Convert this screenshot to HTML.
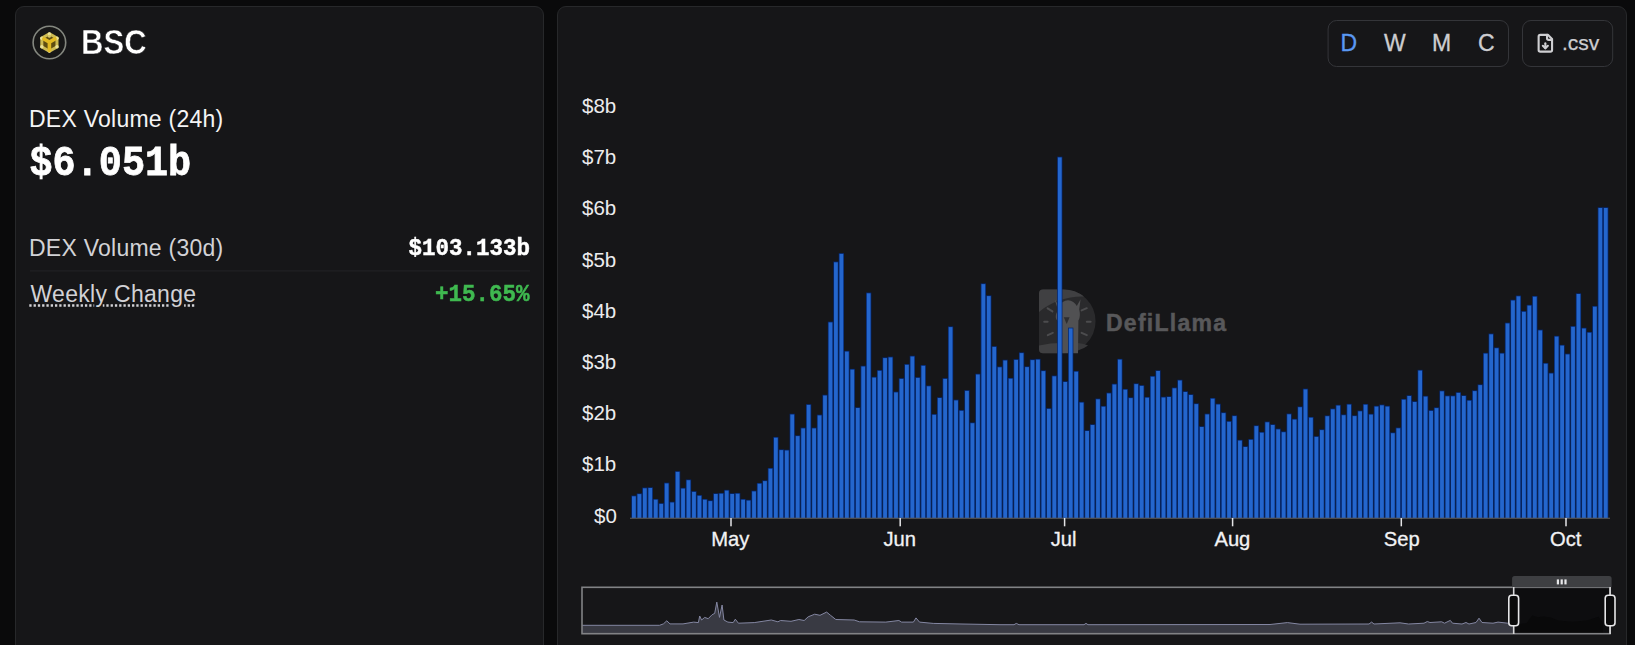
<!DOCTYPE html>
<html><head><meta charset="utf-8"><title>BSC DEX Volume</title>
<style>
html,body{margin:0;padding:0;}
body{width:1635px;height:645px;overflow:hidden;background:#0a0a0b;font-family:"Liberation Sans",sans-serif;position:relative;color:#fff;}
.card{position:absolute;top:6px;height:700px;background:#161618;border:1px solid #27282a;border-radius:9px;box-sizing:border-box;}
#c1{left:15px;width:529px;}
#c2{left:557px;width:1070px;}
.t{position:absolute;white-space:nowrap;line-height:1;margin:0;}
.mono{font-family:"Liberation Mono",monospace;font-weight:bold;}
svg{position:absolute;left:0;top:0;}
.xl{transform:translateX(-50%);font-size:20.2px;color:#f2f2f4;-webkit-text-stroke:0.3px #f2f2f4;}
</style></head><body>
<div class="card" id="c1"></div>
<div class="card" id="c2"></div>

<!-- chain icon -->
<svg width="1635" height="645" viewBox="0 0 1635 645" style="pointer-events:none">
  <g id="icon">
    <circle cx="49.4" cy="42.5" r="16.3" fill="#171717" stroke="#84877f" stroke-width="1.6"/>
    <g style="filter:blur(0.35px)">
    <polygon points="49.40,32.10 58.50,37.30 58.50,47.70 49.40,52.90 40.30,47.70 40.30,37.30" fill="#cdbb52"/>
    <polygon points="49.40,35.50 55.46,39.00 55.46,46.00 49.40,49.50 43.34,46.00 43.34,39.00" fill="#5e4d12"/>
    <circle cx="49.40" cy="33.90" r="1.7" fill="#e9e19a"/><circle cx="57.00" cy="38.20" r="1.7" fill="#e9e19a"/><circle cx="57.00" cy="46.80" r="1.7" fill="#e9e19a"/><circle cx="49.40" cy="51.10" r="1.7" fill="#e9e19a"/><circle cx="41.80" cy="46.80" r="1.7" fill="#e9e19a"/><circle cx="41.80" cy="38.20" r="1.7" fill="#e9e19a"/>
    <path d="M49.4 41.9 L49.4 50.5 M49.4 42.1 L43.8 38.9 M49.4 42.1 L55.0 38.9" stroke="#e2ba22" stroke-width="3.6" fill="none" stroke-linecap="round"/>
    <circle cx="49.4" cy="36.3" r="1.5" fill="#d9c865"/>
    </g>
  </g>

  <!-- watermark -->
  <g id="wm">
    <path d="M1043 289.4 H1063.5 A32.1 31.9 0 0 1 1063.5 353.2 H1043 A4 4 0 0 1 1039 349.2 V293.4 A4 4 0 0 1 1043 289.4 Z" fill="#2a2a2c"/>
    <path d="M1043 289.4 H1063.5 A32.1 31.9 0 0 1 1084 296.6 C1069 296 1052 301 1039 312 V293.4 A4 4 0 0 1 1043 289.4 Z" fill="#404042"/>
    <path d="M1039 345.5 C1048 343.5 1056 342.8 1062 343 L1062 353.2 H1043 A4 4 0 0 1 1039 349.2 Z" fill="#404042"/>
    <path d="M1078 343 C1082 343.5 1086 344.5 1088 345.5 A32 32 0 0 1 1078 350.6 Z" fill="#38383a"/>
    <path d="M1054.6 299.3 L1059.2 306 C1061 303 1064 300.6 1068 300.3 C1072 300.6 1075 303 1076.8 306 L1080.6 299.3 L1079.2 309.5 C1080.2 313 1080.2 318 1078.4 320.5 L1078 353.2 L1062 353.2 L1062 322.3 C1056 322.5 1054.3 317 1057 312 L1057.2 307.5 Z" fill="#515153"/>
    <path d="M1063.8 317.3 L1069.6 317.3 L1066.7 324 Z" fill="#2e2e30"/>
    <g stroke="#4c4c4e" stroke-width="2" stroke-linecap="round">
      <line x1="1047.6" y1="308.4" x2="1052.4" y2="311.4"/><line x1="1081.6" y1="310.4" x2="1086.8" y2="308.2"/>
      <line x1="1044.2" y1="321.8" x2="1047.6" y2="321.8"/><line x1="1086.8" y1="321.8" x2="1090.6" y2="321.8"/>
      <line x1="1047.8" y1="335.2" x2="1052.8" y2="332.8"/><line x1="1081.6" y1="332.8" x2="1086.8" y2="335.2"/>
    </g>
  </g>

  <!-- bars -->
  <clipPath id="cb"><rect x="620" y="90" width="1000" height="428"/></clipPath>
  <g id="bars" fill="#2466cd" stroke="#05276e" stroke-width="1.5" paint-order="stroke" clip-path="url(#cb)">
<rect x="632.00" y="496.3" width="3.8" height="21.7"/>
<rect x="637.46" y="494.1" width="3.8" height="23.9"/>
<rect x="642.92" y="488.3" width="3.8" height="29.7"/>
<rect x="648.38" y="488.0" width="3.8" height="30.0"/>
<rect x="653.84" y="499.7" width="3.8" height="18.3"/>
<rect x="659.30" y="503.9" width="3.8" height="14.1"/>
<rect x="664.76" y="483.4" width="3.8" height="34.6"/>
<rect x="670.22" y="502.5" width="3.8" height="15.5"/>
<rect x="675.68" y="471.9" width="3.8" height="46.1"/>
<rect x="681.14" y="488.6" width="3.8" height="29.4"/>
<rect x="686.60" y="480.2" width="3.8" height="37.8"/>
<rect x="692.06" y="491.9" width="3.8" height="26.1"/>
<rect x="697.52" y="495.8" width="3.8" height="22.2"/>
<rect x="702.98" y="499.7" width="3.8" height="18.3"/>
<rect x="708.44" y="501.1" width="3.8" height="16.9"/>
<rect x="713.90" y="494.0" width="3.8" height="24.0"/>
<rect x="719.36" y="493.7" width="3.8" height="24.3"/>
<rect x="724.82" y="490.6" width="3.8" height="27.4"/>
<rect x="730.28" y="494.0" width="3.8" height="24.0"/>
<rect x="735.74" y="493.7" width="3.8" height="24.3"/>
<rect x="741.20" y="499.7" width="3.8" height="18.3"/>
<rect x="746.66" y="500.6" width="3.8" height="17.4"/>
<rect x="752.12" y="491.4" width="3.8" height="26.6"/>
<rect x="757.58" y="483.7" width="3.8" height="34.3"/>
<rect x="763.04" y="481.1" width="3.8" height="36.9"/>
<rect x="768.50" y="468.7" width="3.8" height="49.3"/>
<rect x="773.96" y="437.7" width="3.8" height="80.3"/>
<rect x="779.42" y="450.1" width="3.8" height="67.9"/>
<rect x="784.88" y="450.5" width="3.8" height="67.5"/>
<rect x="790.34" y="414.5" width="3.8" height="103.5"/>
<rect x="795.80" y="436.1" width="3.8" height="81.9"/>
<rect x="801.26" y="428.4" width="3.8" height="89.6"/>
<rect x="806.72" y="404.9" width="3.8" height="113.1"/>
<rect x="812.18" y="428.4" width="3.8" height="89.6"/>
<rect x="817.64" y="415.4" width="3.8" height="102.6"/>
<rect x="823.10" y="395.5" width="3.8" height="122.5"/>
<rect x="828.56" y="322.4" width="3.8" height="195.6"/>
<rect x="834.02" y="262.3" width="3.8" height="255.7"/>
<rect x="839.48" y="253.9" width="3.8" height="264.1"/>
<rect x="844.94" y="351.6" width="3.8" height="166.4"/>
<rect x="850.40" y="369.6" width="3.8" height="148.4"/>
<rect x="855.86" y="408.0" width="3.8" height="110.0"/>
<rect x="861.32" y="366.5" width="3.8" height="151.5"/>
<rect x="866.78" y="293.3" width="3.8" height="224.7"/>
<rect x="872.24" y="377.6" width="3.8" height="140.4"/>
<rect x="877.70" y="370.8" width="3.8" height="147.2"/>
<rect x="883.16" y="358.1" width="3.8" height="159.9"/>
<rect x="888.62" y="357.4" width="3.8" height="160.6"/>
<rect x="894.08" y="392.4" width="3.8" height="125.6"/>
<rect x="899.54" y="378.9" width="3.8" height="139.1"/>
<rect x="905.00" y="364.8" width="3.8" height="153.2"/>
<rect x="910.46" y="356.5" width="3.8" height="161.5"/>
<rect x="915.92" y="377.9" width="3.8" height="140.1"/>
<rect x="921.38" y="365.8" width="3.8" height="152.2"/>
<rect x="926.84" y="386.3" width="3.8" height="131.7"/>
<rect x="932.30" y="414.8" width="3.8" height="103.2"/>
<rect x="937.76" y="398.0" width="3.8" height="120.0"/>
<rect x="943.22" y="378.9" width="3.8" height="139.1"/>
<rect x="948.68" y="327.1" width="3.8" height="190.9"/>
<rect x="954.14" y="400.4" width="3.8" height="117.6"/>
<rect x="959.60" y="410.8" width="3.8" height="107.2"/>
<rect x="965.06" y="390.9" width="3.8" height="127.1"/>
<rect x="970.52" y="423.2" width="3.8" height="94.8"/>
<rect x="975.98" y="374.5" width="3.8" height="143.5"/>
<rect x="981.44" y="284.1" width="3.8" height="233.9"/>
<rect x="986.90" y="296.1" width="3.8" height="221.9"/>
<rect x="992.36" y="346.9" width="3.8" height="171.1"/>
<rect x="997.82" y="367.3" width="3.8" height="150.7"/>
<rect x="1003.28" y="360.5" width="3.8" height="157.5"/>
<rect x="1008.74" y="378.7" width="3.8" height="139.3"/>
<rect x="1014.20" y="359.9" width="3.8" height="158.1"/>
<rect x="1019.66" y="353.1" width="3.8" height="164.9"/>
<rect x="1025.12" y="367.1" width="3.8" height="150.9"/>
<rect x="1030.58" y="360.1" width="3.8" height="157.9"/>
<rect x="1036.04" y="359.6" width="3.8" height="158.4"/>
<rect x="1041.50" y="371.1" width="3.8" height="146.9"/>
<rect x="1046.96" y="408.9" width="3.8" height="109.1"/>
<rect x="1052.42" y="376.3" width="3.8" height="141.7"/>
<rect x="1057.88" y="157.4" width="3.8" height="360.6"/>
<rect x="1063.34" y="382.0" width="3.8" height="136.0"/>
<rect x="1068.80" y="328.4" width="3.8" height="189.6"/>
<rect x="1074.26" y="371.7" width="3.8" height="146.3"/>
<rect x="1079.72" y="402.6" width="3.8" height="115.4"/>
<rect x="1085.18" y="431.0" width="3.8" height="87.0"/>
<rect x="1090.64" y="425.0" width="3.8" height="93.0"/>
<rect x="1096.10" y="399.3" width="3.8" height="118.7"/>
<rect x="1101.56" y="406.7" width="3.8" height="111.3"/>
<rect x="1107.02" y="393.4" width="3.8" height="124.6"/>
<rect x="1112.48" y="384.5" width="3.8" height="133.5"/>
<rect x="1117.94" y="359.6" width="3.8" height="158.4"/>
<rect x="1123.40" y="389.7" width="3.8" height="128.3"/>
<rect x="1128.86" y="398.1" width="3.8" height="119.9"/>
<rect x="1134.32" y="384.1" width="3.8" height="133.9"/>
<rect x="1139.78" y="385.9" width="3.8" height="132.1"/>
<rect x="1145.24" y="397.7" width="3.8" height="120.3"/>
<rect x="1150.70" y="376.7" width="3.8" height="141.3"/>
<rect x="1156.16" y="371.0" width="3.8" height="147.0"/>
<rect x="1161.62" y="397.5" width="3.8" height="120.5"/>
<rect x="1167.08" y="397.0" width="3.8" height="121.0"/>
<rect x="1172.54" y="388.3" width="3.8" height="129.7"/>
<rect x="1178.00" y="380.5" width="3.8" height="137.5"/>
<rect x="1183.46" y="392.0" width="3.8" height="126.0"/>
<rect x="1188.92" y="395.0" width="3.8" height="123.0"/>
<rect x="1194.38" y="404.1" width="3.8" height="113.9"/>
<rect x="1199.84" y="427.0" width="3.8" height="91.0"/>
<rect x="1205.30" y="414.4" width="3.8" height="103.6"/>
<rect x="1210.76" y="398.7" width="3.8" height="119.3"/>
<rect x="1216.22" y="404.5" width="3.8" height="113.5"/>
<rect x="1221.68" y="413.1" width="3.8" height="104.9"/>
<rect x="1227.14" y="421.8" width="3.8" height="96.2"/>
<rect x="1232.60" y="416.1" width="3.8" height="101.9"/>
<rect x="1238.06" y="440.6" width="3.8" height="77.4"/>
<rect x="1243.52" y="447.0" width="3.8" height="71.0"/>
<rect x="1248.98" y="439.8" width="3.8" height="78.2"/>
<rect x="1254.44" y="426.1" width="3.8" height="91.9"/>
<rect x="1259.90" y="432.7" width="3.8" height="85.3"/>
<rect x="1265.36" y="422.3" width="3.8" height="95.7"/>
<rect x="1270.82" y="425.0" width="3.8" height="93.0"/>
<rect x="1276.28" y="429.4" width="3.8" height="88.6"/>
<rect x="1281.74" y="432.2" width="3.8" height="85.8"/>
<rect x="1287.20" y="414.3" width="3.8" height="103.7"/>
<rect x="1292.66" y="419.6" width="3.8" height="98.4"/>
<rect x="1298.12" y="407.2" width="3.8" height="110.8"/>
<rect x="1303.58" y="389.4" width="3.8" height="128.6"/>
<rect x="1309.04" y="417.7" width="3.8" height="100.3"/>
<rect x="1314.50" y="436.9" width="3.8" height="81.1"/>
<rect x="1319.96" y="430.1" width="3.8" height="87.9"/>
<rect x="1325.42" y="416.2" width="3.8" height="101.8"/>
<rect x="1330.88" y="409.3" width="3.8" height="108.7"/>
<rect x="1336.34" y="405.6" width="3.8" height="112.4"/>
<rect x="1341.80" y="415.2" width="3.8" height="102.8"/>
<rect x="1347.26" y="404.6" width="3.8" height="113.4"/>
<rect x="1352.72" y="416.1" width="3.8" height="101.9"/>
<rect x="1358.18" y="411.3" width="3.8" height="106.7"/>
<rect x="1363.64" y="404.7" width="3.8" height="113.3"/>
<rect x="1369.10" y="414.6" width="3.8" height="103.4"/>
<rect x="1374.56" y="406.6" width="3.8" height="111.4"/>
<rect x="1380.02" y="405.3" width="3.8" height="112.7"/>
<rect x="1385.48" y="406.6" width="3.8" height="111.4"/>
<rect x="1390.94" y="433.2" width="3.8" height="84.8"/>
<rect x="1396.40" y="428.3" width="3.8" height="89.7"/>
<rect x="1401.86" y="399.7" width="3.8" height="118.3"/>
<rect x="1407.32" y="396.0" width="3.8" height="122.0"/>
<rect x="1412.78" y="402.0" width="3.8" height="116.0"/>
<rect x="1418.24" y="370.6" width="3.8" height="147.4"/>
<rect x="1423.70" y="396.6" width="3.8" height="121.4"/>
<rect x="1429.16" y="410.9" width="3.8" height="107.1"/>
<rect x="1434.62" y="408.1" width="3.8" height="109.9"/>
<rect x="1440.08" y="391.3" width="3.8" height="126.7"/>
<rect x="1445.54" y="396.3" width="3.8" height="121.7"/>
<rect x="1451.00" y="396.3" width="3.8" height="121.7"/>
<rect x="1456.46" y="392.9" width="3.8" height="125.1"/>
<rect x="1461.92" y="396.0" width="3.8" height="122.0"/>
<rect x="1467.38" y="400.7" width="3.8" height="117.3"/>
<rect x="1472.84" y="391.1" width="3.8" height="126.9"/>
<rect x="1478.30" y="385.1" width="3.8" height="132.9"/>
<rect x="1483.76" y="353.6" width="3.8" height="164.4"/>
<rect x="1489.22" y="334.3" width="3.8" height="183.7"/>
<rect x="1494.68" y="348.2" width="3.8" height="169.8"/>
<rect x="1500.14" y="353.6" width="3.8" height="164.4"/>
<rect x="1505.60" y="323.4" width="3.8" height="194.6"/>
<rect x="1511.06" y="300.5" width="3.8" height="217.5"/>
<rect x="1516.52" y="296.3" width="3.8" height="221.7"/>
<rect x="1521.98" y="311.8" width="3.8" height="206.2"/>
<rect x="1527.44" y="305.6" width="3.8" height="212.4"/>
<rect x="1532.90" y="296.7" width="3.8" height="221.3"/>
<rect x="1538.36" y="330.4" width="3.8" height="187.6"/>
<rect x="1543.82" y="363.7" width="3.8" height="154.3"/>
<rect x="1549.28" y="373.5" width="3.8" height="144.5"/>
<rect x="1554.74" y="336.6" width="3.8" height="181.4"/>
<rect x="1560.20" y="345.6" width="3.8" height="172.4"/>
<rect x="1565.66" y="354.4" width="3.8" height="163.6"/>
<rect x="1571.12" y="326.8" width="3.8" height="191.2"/>
<rect x="1576.58" y="294.0" width="3.8" height="224.0"/>
<rect x="1582.04" y="328.5" width="3.8" height="189.5"/>
<rect x="1587.50" y="332.7" width="3.8" height="185.3"/>
<rect x="1592.96" y="306.7" width="3.8" height="211.3"/>
<rect x="1598.42" y="208.0" width="3.8" height="310.0"/>
<rect x="1603.88" y="208.0" width="3.8" height="310.0"/>
  </g>
  <!-- axis -->
  <rect x="630" y="517.7" width="980" height="1.1" fill="#5a5b5f"/>
  <g fill="#e4e4e6">
    <rect x="730.25" y="518" width="1.5" height="8.3"/>
    <rect x="899.45" y="518" width="1.5" height="8.3"/>
    <rect x="1063.85" y="518" width="1.5" height="8.3"/>
    <rect x="1231.85" y="518" width="1.5" height="8.3"/>
    <rect x="1400.55" y="518" width="1.5" height="8.3"/>
    <rect x="1565.25" y="518" width="1.5" height="8.3"/>
  </g>

  <!-- data zoom -->
  <g id="dz">
    <polygon points="582.0,625.3 659.5,625.3 663.4,623.9 666.8,620.8 670.0,623.9 683.0,623.9 693.7,622.1 698.4,622.6 699.7,616.0 701.6,620.0 704.7,617.4 708.2,618.7 712.1,614.7 714.7,613.4 716.8,602.1 719.5,617.4 722.1,605.0 723.9,620.0 727.9,622.1 733.2,622.6 735.3,619.2 738.4,623.2 754.2,622.6 771.3,620.0 777.9,621.8 780.5,620.5 791.0,621.3 798.9,619.5 804.2,620.5 808.2,616.8 814.7,614.2 820.0,615.3 826.6,612.1 830.5,615.3 835.8,619.5 854.2,620.0 859.5,621.8 885.8,622.1 898.9,620.5 901.6,622.1 913.4,622.1 916.0,617.9 919.5,622.1 933.2,623.4 962.0,624.0 1000.0,624.7 1014.0,624.7 1016.3,623.4 1019.0,624.7 1084.0,624.7 1086.0,623.4 1088.0,624.7 1270.0,624.5 1287.4,622.6 1300.0,624.2 1369.0,624.0 1371.6,622.1 1374.0,624.0 1400.0,622.8 1408.6,624.0 1424.0,623.2 1427.3,621.5 1430.0,622.5 1441.7,621.8 1444.5,623.2 1450.3,620.4 1452.5,623.2 1462.0,624.0 1466.0,622.5 1469.0,624.0 1476.0,622.5 1479.0,618.2 1482.0,622.5 1493.0,623.2 1498.0,622.1 1507.8,623.2 1513.6,623.2 1513.6,633.5 582,633.5" fill="#393a43"/>
    <polyline points="582.0,625.3 659.5,625.3 663.4,623.9 666.8,620.8 670.0,623.9 683.0,623.9 693.7,622.1 698.4,622.6 699.7,616.0 701.6,620.0 704.7,617.4 708.2,618.7 712.1,614.7 714.7,613.4 716.8,602.1 719.5,617.4 722.1,605.0 723.9,620.0 727.9,622.1 733.2,622.6 735.3,619.2 738.4,623.2 754.2,622.6 771.3,620.0 777.9,621.8 780.5,620.5 791.0,621.3 798.9,619.5 804.2,620.5 808.2,616.8 814.7,614.2 820.0,615.3 826.6,612.1 830.5,615.3 835.8,619.5 854.2,620.0 859.5,621.8 885.8,622.1 898.9,620.5 901.6,622.1 913.4,622.1 916.0,617.9 919.5,622.1 933.2,623.4 962.0,624.0 1000.0,624.7 1014.0,624.7 1016.3,623.4 1019.0,624.7 1084.0,624.7 1086.0,623.4 1088.0,624.7 1270.0,624.5 1287.4,622.6 1300.0,624.2 1369.0,624.0 1371.6,622.1 1374.0,624.0 1400.0,622.8 1408.6,624.0 1424.0,623.2 1427.3,621.5 1430.0,622.5 1441.7,621.8 1444.5,623.2 1450.3,620.4 1452.5,623.2 1462.0,624.0 1466.0,622.5 1469.0,624.0 1476.0,622.5 1479.0,618.2 1482.0,622.5 1493.0,623.2 1498.0,622.1 1507.8,623.2 1513.6,623.2" fill="none" stroke="#8487a2" stroke-width="1"/>
    <rect x="1513.6" y="587.3" width="96.5" height="46.4" fill="#0d0d0f"/>
    <polygon points="1520,624 1526.5,623.2 1532.2,615.6 1538,617.2 1543.7,616.6 1551,617.6 1558.1,620.4 1572.5,621.8 1586.9,620.6 1598.4,616.8 1603,623 1603,633.5 1520,633.5" fill="#09090a"/>
    <rect x="582" y="587.3" width="1028" height="46.4" fill="none" stroke="#818285" stroke-width="1.6"/>
    <path d="M1512.1 587.3 V578.6 A2.5 2.5 0 0 1 1514.6 576.1 H1609.1 A2.5 2.5 0 0 1 1611.6 578.6 V587.3 Z" fill="#3e3f42"/>
    <g fill="#e8e8ea"><rect x="1556.8" y="579.4" width="2.2" height="5"/><rect x="1560.6" y="579.4" width="2.2" height="5"/><rect x="1564.4" y="579.4" width="2.2" height="5"/></g>
    <rect x="1512.9" y="587" width="1.6" height="47" fill="#d6d6d8"/>
    <rect x="1609.3" y="587" width="1.6" height="47" fill="#d6d6d8"/>
    <rect x="1508.8" y="595.2" width="9.8" height="30.6" rx="3" ry="3" fill="#0a0a0b" stroke="#e6e6e8" stroke-width="1.6"/>
    <rect x="1605.2" y="595.2" width="9.8" height="30.6" rx="3" ry="3" fill="#0a0a0b" stroke="#e6e6e8" stroke-width="1.6"/>
  </g>

  <!-- buttons -->
  <rect x="1328.1" y="20.5" width="180.4" height="46" rx="8.5" fill="none" stroke="#343539" stroke-width="1"/>
  <rect x="1522.5" y="20.5" width="90.2" height="46" rx="8.5" fill="none" stroke="#343539" stroke-width="1"/>
  <g id="csvicon" transform="translate(1535.27,33.17) scale(0.84)" fill="none" stroke="#cfcfd2" stroke-width="2.5" stroke-linecap="round" stroke-linejoin="round">
    <path d="M15 2H6a2 2 0 0 0-2 2v16a2 2 0 0 0 2 2h12a2 2 0 0 0 2-2V7Z"/>
    <path d="M14 2v4a2 2 0 0 0 2 2h4"/>
    <path d="M12 18v-6"/><path d="m9 15 3 3 3-3"/>
  </g>
  <!-- separator -->
  <rect x="30" y="270.4" width="500" height="1" fill="#232427"/>
  <line x1="29.3" y1="305.5" x2="94.2" y2="305.5" stroke="#d2d2d6" stroke-width="2.5" stroke-dasharray="2.3 1.98" stroke-dashoffset="0.00"/>
  <line x1="102.8" y1="305.5" x2="169.1" y2="305.5" stroke="#d2d2d6" stroke-width="2.5" stroke-dasharray="2.3 1.98" stroke-dashoffset="0.74"/>
  <line x1="184.1" y1="305.5" x2="195.3" y2="305.5" stroke="#d2d2d6" stroke-width="2.5" stroke-dasharray="2.3 1.98" stroke-dashoffset="0.72"/>
</svg>

<!-- texts -->
<div class="t" id="t_bsc" style="left:81px;top:25px;font-size:34.5px;font-weight:bold;-webkit-text-stroke:0.55px #161618;transform:scaleX(0.9);transform-origin:0 0;">BSC</div>
<div class="t" id="t_l24" style="left:29px;top:107.5px;font-size:23px;letter-spacing:0.25px;color:#f4f4f5;">DEX Volume (24h)</div>
<div class="t mono" id="t_v24" style="left:29.5px;top:143px;font-size:38.5px;-webkit-text-stroke:0.7px #fff;transform:scaleY(1.11);transform-origin:0 0;">$6.051b</div>
<div class="t" id="t_l30" style="left:29px;top:236.5px;font-size:23px;letter-spacing:0.25px;color:#d2d2d6;">DEX Volume (30d)</div>
<div class="t mono" id="t_v30" style="left:408.5px;top:237px;font-size:22.5px;-webkit-text-stroke:0.45px #fff;transform:scaleY(1.08);transform-origin:0 0;">$103.133b</div>
<div class="t" id="t_wk" style="left:30.5px;top:282.5px;font-size:23px;letter-spacing:0.3px;color:#d2d2d6;">Weekly Change</div>
<div class="t mono" id="t_wv" style="left:435px;top:283px;font-size:22.5px;-webkit-text-stroke:0.45px #3fb950;transform:scaleY(1.07);transform-origin:0 0;color:#3fb950;">+15.65%</div>

<div class="t" id="t_D" style="-webkit-text-stroke:0.3px;left:1340.5px;top:31.5px;font-size:23px;color:#5a98f2;">D</div>
<div class="t" id="t_W" style="-webkit-text-stroke:0.3px;left:1384px;top:31.5px;font-size:23px;color:#cdcdd0;">W</div>
<div class="t" id="t_M" style="-webkit-text-stroke:0.3px;left:1432px;top:31.5px;font-size:23px;color:#cdcdd0;">M</div>
<div class="t" id="t_C" style="-webkit-text-stroke:0.3px;left:1478px;top:31.5px;font-size:23px;color:#cdcdd0;">C</div>
<div class="t" id="t_csv" style="-webkit-text-stroke:0.25px;left:1562px;top:32px;font-size:21px;color:#cdcdd0;">.csv</div>

<div class="t" id="t_wm" style="left:1106px;top:312px;font-size:23px;font-weight:bold;color:#58585a;letter-spacing:1.25px;-webkit-text-stroke:0.5px #58585a;">DefiLlama</div>

<div class="t yl" id="y8" style="left:582px;top:96.1px;font-size:20.5px;color:#ececee;">$8b</div>
<div class="t yl" id="y7" style="left:582px;top:147.3px;font-size:20.5px;color:#ececee;">$7b</div>
<div class="t yl" id="y6" style="left:582px;top:198.4px;font-size:20.5px;color:#ececee;">$6b</div>
<div class="t yl" id="y5" style="left:582px;top:249.6px;font-size:20.5px;color:#ececee;">$5b</div>
<div class="t yl" id="y4" style="left:582px;top:300.8px;font-size:20.5px;color:#ececee;">$4b</div>
<div class="t yl" id="y3" style="left:582px;top:352.0px;font-size:20.5px;color:#ececee;">$3b</div>
<div class="t yl" id="y2" style="left:582px;top:403.1px;font-size:20.5px;color:#ececee;">$2b</div>
<div class="t yl" id="y1" style="left:582px;top:454.3px;font-size:20.5px;color:#ececee;">$1b</div>
<div class="t yl" id="y0" style="left:594px;top:505.5px;font-size:20.5px;color:#ececee;">$0</div>

<div class="t xl" id="xMay" style="left:730.3px;top:528.6px;">May</div>
<div class="t xl" id="xJun" style="left:899.8px;top:528.6px;">Jun</div>
<div class="t xl" id="xJul" style="left:1063.6px;top:528.6px;">Jul</div>
<div class="t xl" id="xAug" style="left:1232.4px;top:528.6px;">Aug</div>
<div class="t xl" id="xSep" style="left:1401.7px;top:528.6px;">Sep</div>
<div class="t xl" id="xOct" style="left:1565.7px;top:528.6px;">Oct</div>
</body></html>
